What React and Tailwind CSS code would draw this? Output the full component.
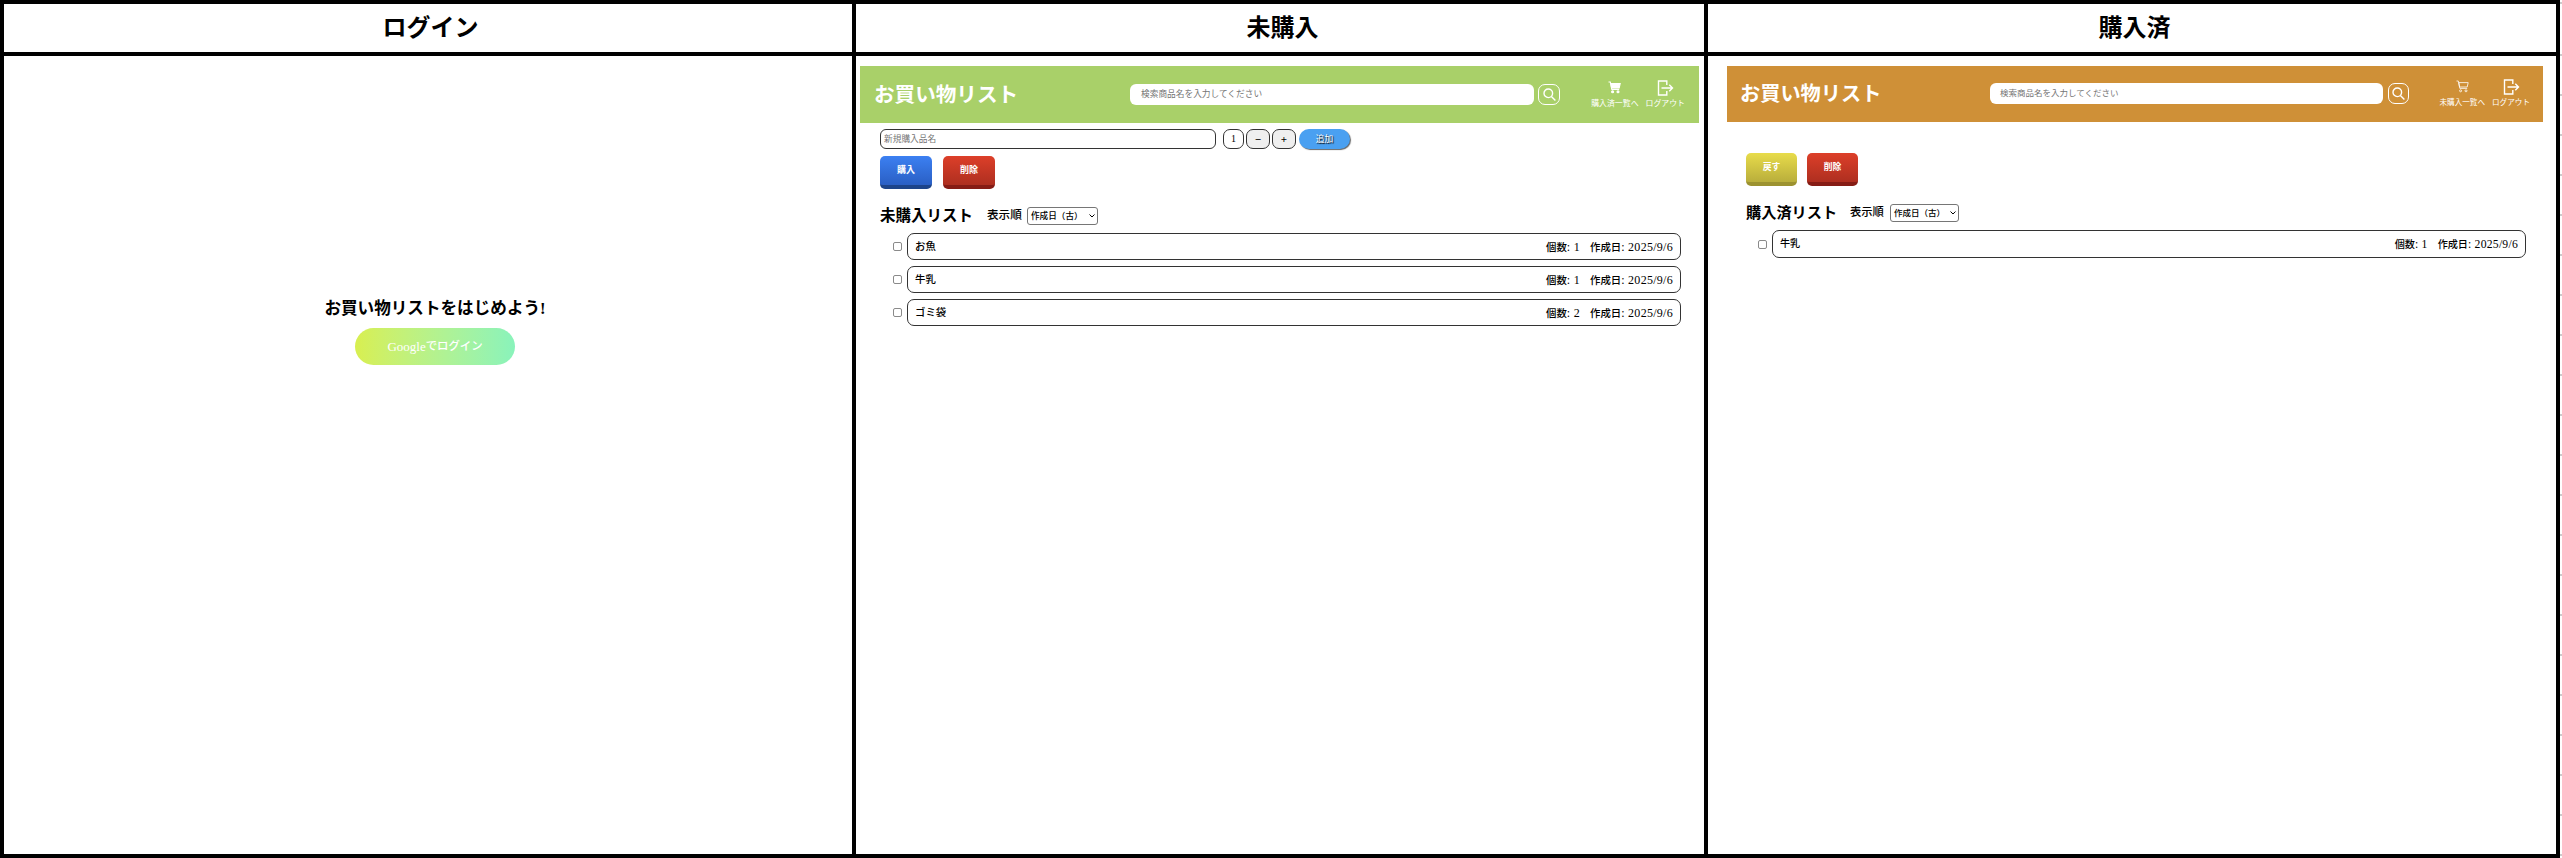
import React from "react";

const serif = "font-['Liberation_Serif','Noto_Sans_CJK_JP',serif]";
const sans = "font-['Noto_Sans_CJK_JP',sans-serif]";

const pending = {
  title: "未購入リスト",
  navLabel: "購入済一覧へ",
  action: "購入",
  filledCart: true,
  items: [
    { name: "お魚", count: 1 },
    { name: "牛乳", count: 1 },
    { name: "ゴミ袋", count: 2 },
  ],
  c: {
    panel: "pl-1 pr-[5px] pt-[10px]",
    header: "h-[57px] bg-[#a9d069] pl-[14px] pr-[14px] pb-px",
    logo: "w-[256px] text-[20.6px]",
    search: "w-[404px] h-[21px] pl-[11px] text-[8.7px]",
    searchBtn: "ml-[4px] w-[22px] h-[21px]",
    nav: "gap-[7px] text-[7.9px]",
    body: "pl-5 pr-[18px]",
    actions: "mt-[6px] gap-[11px]",
    btn: "w-[52px] h-[33px] text-[9px]",
    primary: "bg-linear-to-b from-[#3c80f2] to-[#2a5fc4] border-[#1d4489]",
    heading: "mt-[17px] h-[20px]",
    h2: "w-[107px] text-[15.5px]",
    order: "w-[40px] text-[11.6px]",
    select: "w-[71px] h-[18px] text-[8.6px]",
    list: "mt-[7px] gap-[6px] pl-[13px]",
    row: "h-[27px] text-[10.4px]",
    digits: "text-[12px] tracking-[0.28px]",
  },
};

const done = {
  title: "購入済リスト",
  navLabel: "未購入一覧へ",
  action: "戻す",
  filledCart: false,
  items: [{ name: "牛乳", count: 1 }],
  c: {
    panel: "pl-[19px] pr-[13px] pt-[10px]",
    header: "h-[56px] bg-[#cf9037] pl-[13px] pr-[13px] pb-[2px]",
    logo: "w-[250px] text-[20.2px]",
    search: "w-[393px] h-[21px] pl-[10px] text-[8.5px]",
    searchBtn: "ml-[5px] w-[21px] h-[21px]",
    nav: "gap-[7px] text-[7.6px]",
    body: "pl-[19px] pr-[17px]",
    actions: "mt-[31px] gap-[10px]",
    btn: "w-[51px] h-[33px] text-[8.8px]",
    primary: "bg-linear-to-b from-[#e8dc4a] to-[#b9ae3c] border-[#9c9230]",
    heading: "mt-[17px] h-[20px]",
    h2: "w-[104px] text-[15.2px]",
    order: "w-[40px] text-[11.3px]",
    select: "w-[69px] h-[18px] text-[8.5px]",
    list: "mt-[7px] gap-[6px] pl-[12px]",
    row: "h-[28px] text-[10.1px]",
    digits: "text-[11.7px] tracking-[0.23px]",
  },
};

function Cart({ filled }) {
  return (
    <svg className="w-[13px] h-[13px]" viewBox="0 0 13 13" fill="none" stroke="white" strokeWidth={filled ? 1.1 : 0.8}>
      <path d="M0.5 1h1.8l1.5 7.4h7.4" />
      <path d="M2.8 2.6h9.4l-1 4.4H3.6z" fill={filled ? "white" : "none"} />
      <circle cx="4.6" cy="10.8" r="1" fill={filled ? "white" : "none"} />
      <circle cx="10" cy="10.8" r="1" fill={filled ? "white" : "none"} />
    </svg>
  );
}

function Logout() {
  return (
    <svg className="w-[17px] h-[16px]" viewBox="0 0 17 16" fill="none" stroke="white" strokeWidth="1.4">
      <path d="M9.8 5V1H1.5v14h8.3v-4M4.5 8h11M12.3 4.8 15.5 8l-3.2 3.2" />
    </svg>
  );
}

function ShoppingPanel({ data, children }) {
  const { c } = data;
  return (
    <div className={`${c.panel} ${serif} text-black`}>
      <header className={`${c.header} flex items-center text-white`}>
        <h1 className={`${c.logo} shrink-0 pt-[2px] font-bold leading-none`}>お買い物リスト</h1>
        <div className={`${c.search} flex shrink-0 items-center rounded-md bg-white pt-px text-[#757575]`}>
          検索商品名を入力してください
        </div>
        <div className={`${c.searchBtn} flex shrink-0 items-center justify-center rounded-[7px] border border-white`}>
          <svg className="h-[13px] w-[13px]" viewBox="0 0 13 13" fill="none" stroke="white" strokeWidth="1.4">
            <circle cx="5.3" cy="5.3" r="4.3" />
            <path d="m8.4 8.4 4 4" />
          </svg>
        </div>
        <nav className={`${c.nav} ml-auto flex shrink-0 leading-none whitespace-nowrap`}>
          <div className="flex flex-col items-center">
            <span className="flex h-[20px] items-start pt-px"><Cart filled={data.filledCart} /></span>
            {data.navLabel}
          </div>
          <div className="flex flex-col items-center">
            <span className="flex h-[20px] items-start"><Logout /></span>
            ログアウト
          </div>
        </nav>
      </header>
      <div className={c.body}>
        {children}
        <div className={`${c.actions} flex font-bold text-white`}>
          <div className={`${c.btn} ${c.primary} flex items-center justify-center rounded-[5px] border-b-4 pt-px`}>{data.action}</div>
          <div className={`${c.btn} flex items-center justify-center rounded-[5px] border-b-4 border-[#861c15] bg-linear-to-b from-[#dd3f29] to-[#ae2f20] pt-px`}>削除</div>
        </div>
        <div className={`${c.heading} flex items-center leading-none whitespace-nowrap`}>
          <h2 className={`${c.h2} font-bold`}>{data.title}</h2>
          <span className={`${c.order} font-medium`}>表示順</span>
          <div className={`${c.select} flex items-center justify-between rounded-[3px] border border-[#767676] pl-[3px] pr-[2px] font-medium`}>
            作成日（古）
            <svg className="h-[6px] w-[6px]" viewBox="0 0 6 6" fill="none" stroke="black"><path d="m.5 1.5 2.5 2.5 2.5-2.5" /></svg>
          </div>
        </div>
        <ul className={`${c.list} flex flex-col`}>
          {data.items.map((item) => (
            <li key={item.name} className="flex items-center gap-[5px]">
              <span className="h-[9px] w-[9px] rounded-[2px] border border-[#8a8a8a]" />
              <div className={`${c.row} flex flex-1 items-center rounded-[7px] border border-[#333] pl-[7px] pr-[7px] pt-px font-medium leading-none`}>
                <span>{item.name}</span>
                <span className="ml-auto flex items-baseline whitespace-pre">
                  個数<span className={c.digits}>: {item.count}</span>
                  <span className="ml-[10px]">作成日</span>
                  <span className={c.digits}>: 2025/9/6</span>
                </span>
              </div>
            </li>
          ))}
        </ul>
      </div>
    </div>
  );
}

function AddForm() {
  return (
    <div className="flex pt-[6px] pb-px text-[8.7px] leading-none">
      <div className="flex h-[20px] w-[336px] items-center rounded-md border border-[#333] pl-[3px] pt-px text-[#757575]">新規購入品名</div>
      <div className="ml-[7px] flex h-[20px] w-[21px] items-center justify-center rounded-[7px] border border-[#333] text-[10px]">1</div>
      <div className="ml-[2px] flex h-[20px] w-[24px] items-center justify-center rounded-[7px] border border-[#333] bg-[#efefef] text-[11px] font-bold">−</div>
      <div className="ml-[2px] flex h-[20px] w-[24px] items-center justify-center rounded-[7px] border border-[#333] bg-[#efefef] text-[11px] font-bold">+</div>
      <div className="ml-[3px] flex h-[20px] w-[51px] items-center justify-center rounded-full bg-[#4aa0f1] text-white shadow-[1px_1px_1px_#666] [text-shadow:1px_1px_1px_#000]">追加</div>
    </div>
  );
}

function Heading({ children }) {
  return <div className={`flex h-12 items-center justify-center bg-white pb-[5px] pl-[5px] text-[24px] font-bold leading-none ${sans}`}>{children}</div>;
}

function SheetEdge() {
  return (
    <div className="flex w-[2px] flex-col pt-[2px]">
      <div className="mb-[50px] h-[2px] shrink-0 bg-[#ccc]" />
      {Array.from({ length: 21 }, (_, i) => (
        <div key={i} className="mb-[38px] h-[2px] shrink-0 bg-[#ccc]" />
      ))}
    </div>
  );
}

export default function App() {
  return (
    <div className="flex h-[858px] w-[2562px] overflow-hidden bg-white">
      <div className="grid h-[858px] w-[2560px] shrink-0 grid-cols-[848px_848px_848px] grid-rows-[48px_798px] gap-1 bg-black p-1 text-black">
        <Heading>ログイン</Heading>
        <Heading>未購入</Heading>
        <Heading>購入済</Heading>
        <div className={`flex flex-col items-center bg-white pt-[245px] pl-[14px] ${serif}`}>
          <p className="text-[16.6px] font-bold leading-none">お買い物リストをはじめよう!</p>
          <div className="mt-[10px] flex h-[37px] w-[160px] items-center justify-center rounded-full bg-linear-to-r from-[#d8ef4f] to-[#89f3bb] pt-px font-medium text-white">
            <span className="text-[13px]">Google</span>
            <span className="text-[11.4px]">でログイン</span>
          </div>
        </div>
        <div className="bg-white"><ShoppingPanel data={pending}><AddForm /></ShoppingPanel></div>
        <div className="bg-white"><ShoppingPanel data={done} /></div>
      </div>
      <SheetEdge />
    </div>
  );
}
